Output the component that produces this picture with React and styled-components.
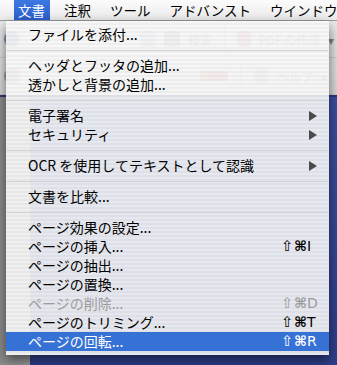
import React from 'react';
import styled, { createGlobalStyle } from 'styled-components';

const GlobalStyle = createGlobalStyle`
  html, body {
    margin: 0;
    padding: 0;
    background: #34468f;
  }
  body {
    font-family: "Noto Sans CJK JP", "Noto Sans", sans-serif;
    -webkit-font-smoothing: antialiased;
  }
`;

const JP = `"Noto Sans CJK JP", "Noto Sans", sans-serif`;

const Screen = styled.div`
  position: relative;
  width: 337px;
  height: 365px;
  overflow: hidden;
  display: flex;
  flex-direction: column;
  background: #3a4c9a;
`;

const MenuBar = styled.div`
  height: 20px;
  display: flex;
  align-items: stretch;
  gap: 10px;
  padding-left: 14px;
  background: linear-gradient(#fbfbfb, #ececec);
  border-bottom: 1px solid #9a9a9a;
  font-family: ${JP};
  font-size: 13.5px;
  color: #000;
  overflow: hidden;
`;

const BarItem = styled.div`
  display: flex;
  align-items: center;
  padding: 0 5px 0 4px;
  line-height: 20px;
  background: ${p => (p.$open ? 'linear-gradient(#3d78e0, #2a5fcf)' : 'transparent')};
  color: ${p => (p.$open ? '#fff' : '#000')};
  white-space: nowrap;
  flex-shrink: 0;
`;

const Toolbar = styled.div`
  height: 74px;
  display: flex;
  flex-direction: column;
  background: linear-gradient(#ececec, #d9d9d9);
  border-bottom: 2px solid #2d3a7c;
  font-family: ${JP};
  font-size: 12px;
  color: #888;
`;

const ToolRow = styled.div`
  flex: 1;
  display: flex;
  align-items: center;
  gap: 8px;
  padding-left: ${p => p.$indent}px;
  border-bottom: 1px solid #cccccc;
`;

const ToolIcon = styled.div`
  width: ${p => p.$w || 16}px;
  height: ${p => p.$h || 16}px;
  border-radius: ${p => (p.$round ? '50%' : '3px')};
  background: ${p => p.$color || '#a0a0a0'};
`;

const ToolSep = styled.div`
  width: 1px;
  align-self: stretch;
  margin: 4px 4px;
  background: #bdbdbd;
`;

const Lower = styled.div`
  flex: 1;
  display: flex;
`;

const Sidebar = styled.div`
  width: 30px;
  background: linear-gradient(90deg, #8c8c8c, #9a9a9a);
`;

const Desktop = styled.div`
  flex: 1;
  background: linear-gradient(#3d50a0, #2f3f8a);
`;

const Menu = styled.div`
  position: absolute;
  left: 6px;
  top: 21px;
  width: 323px;
  padding: 4px 0 4px;
  display: flex;
  flex-direction: column;
  background: repeating-linear-gradient(
    rgba(248, 248, 248, 0.91) 0 2px,
    rgba(239, 239, 239, 0.91) 2px 4px
  );
  box-shadow: 0 5px 12px rgba(0, 0, 0, 0.55);
  font-family: ${JP};
  font-size: 14px;
`;

const Row = styled.div`
  height: 19px;
  display: flex;
  align-items: center;
  padding: 0 12px 0 22px;
  color: ${p => (p.$active ? '#fff' : p.$disabled ? '#9c9c9c' : '#000')};
  background: ${p => (p.$active ? '#3671d5' : 'transparent')};
  white-space: nowrap;
`;

const Label = styled.span`
  flex: 1;
  line-height: 19px;
`;

const Separator = styled.div`
  height: 12px;
  display: flex;
  align-items: center;
  &::after {
    content: '';
    flex: 1;
    height: 1px;
    margin: 0 1px;
    background: #d2d2d2;
  }
`;

const Shortcut = styled.span`
  display: flex;
  align-items: center;
  line-height: 19px;
`;

const Shift = styled.span`
  width: 13px;
  font-family: "DejaVu Sans", sans-serif;
  font-size: 15px;
`;

const Cmd = styled.span`
  width: 13px;
  font-family: "DejaVu Sans", sans-serif;
  font-size: 14px;
  font-weight: bold;
`;

const Key = styled.span`
  width: 10px;
  font-family: "DejaVu Sans", sans-serif;
  font-size: 14px;
`;

const Arrow = styled.svg`
  width: 8px;
  height: 10px;
  fill: ${p => (p.$active ? '#fff' : '#4a4a4a')};
`;

const items = [
  { label: 'ファイルを添付...' },
  'sep',
  { label: 'ヘッダとフッタの追加...' },
  { label: '透かしと背景の追加...' },
  'sep',
  { label: '電子署名', sub: true },
  { label: 'セキュリティ', sub: true },
  'sep',
  { label: 'OCR を使用してテキストとして認識', sub: true },
  'sep',
  { label: '文書を比較...' },
  'sep',
  { label: 'ページ効果の設定...' },
  { label: 'ページの挿入...', key: 'I' },
  { label: 'ページの抽出...' },
  { label: 'ページの置換...' },
  { label: 'ページの削除...', key: 'D', disabled: true },
  { label: 'ページのトリミング...', key: 'T' },
  { label: 'ページの回転...', key: 'R', active: true },
];

const barItems = ['文書', '注釈', 'ツール', 'アドバンスト', 'ウインドウ'];

export default function App() {
  return (
    <>
      <GlobalStyle />
      <Screen>
        <MenuBar>
          {barItems.map((b, i) => (
            <BarItem key={b} $open={i === 0}>{b}</BarItem>
          ))}
        </MenuBar>

        <Toolbar>
          <ToolRow $indent={4}>
            <ToolIcon $round $color="#7f8fb0" />
            <div style={{ width: 104 }} />
            <ToolIcon $color="#b0b8c8" />
            <ToolIcon $color="#9a9a9a" />
            <span>検索</span>
            <ToolSep />
            <ToolIcon $w={14} $color="#d08a8a" />
            <span>PDF の作成</span>
            <span>▾</span>
          </ToolRow>
          <ToolRow $indent={4}>
            <ToolIcon $round $color="#a0a0a0" />
            <div style={{ width: 164 }} />
            <ToolIcon $w={28} $h={10} $color="#d47070" />
            <ToolSep />
            <ToolIcon $round $color="#a8b0a4" />
            <span>ヘルプ</span>
            <span>▾</span>
          </ToolRow>
        </Toolbar>

        <Lower>
          <Sidebar />
          <Desktop />
        </Lower>

        <Menu>
          {items.map((it, i) =>
            it === 'sep' ? (
              <Separator key={i} />
            ) : (
              <Row key={i} $active={it.active} $disabled={it.disabled}>
                <Label>{it.label}</Label>
                {it.key && (
                  <Shortcut>
                    <Shift>⇧</Shift>
                    <Cmd>⌘</Cmd>
                    <Key>{it.key}</Key>
                  </Shortcut>
                )}
                {it.sub && (
                  <Arrow viewBox="0 0 8 10" $active={it.active}>
                    <path d="M0 0 L8 5 L0 10 Z" />
                  </Arrow>
                )}
              </Row>
            )
          )}
        </Menu>
      </Screen>
    </>
  );
}
